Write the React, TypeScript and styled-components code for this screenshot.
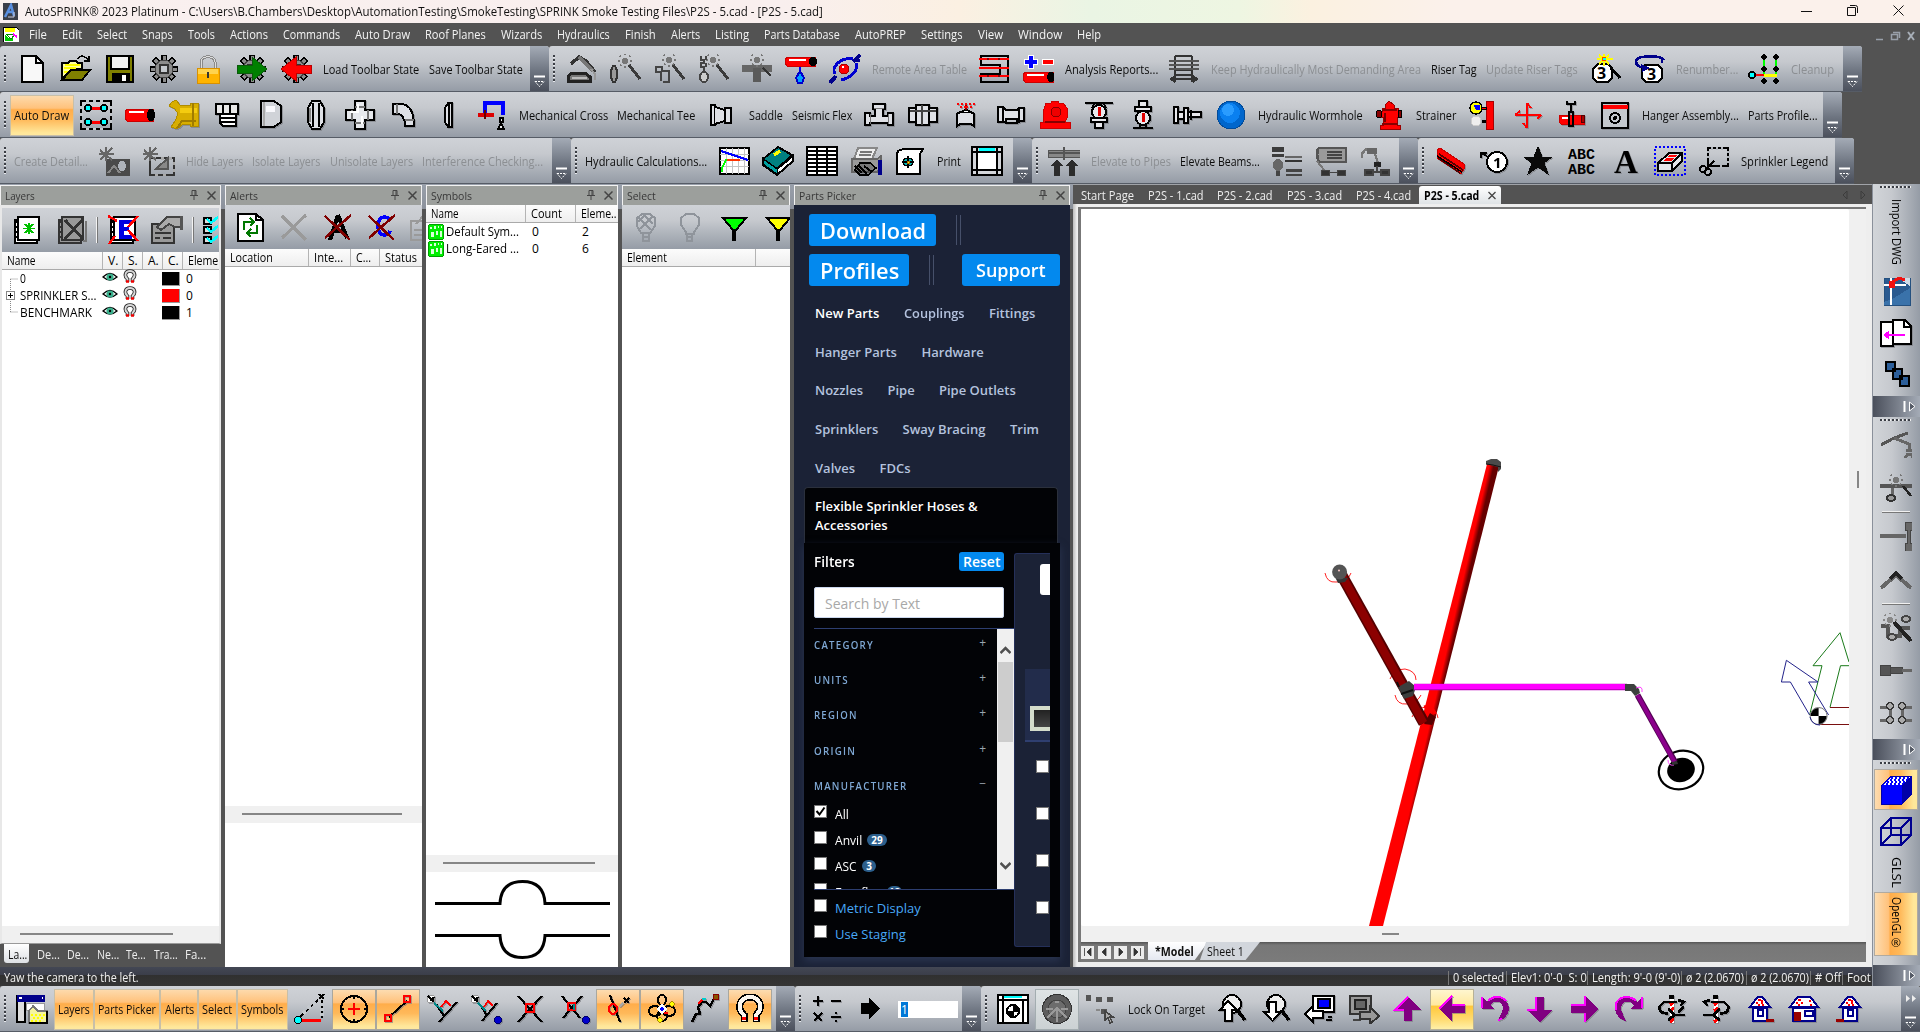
import React, { useLayoutEffect, useRef, useState } from 'react';
import styled, { createGlobalStyle, css } from 'styled-components';

const Global = createGlobalStyle`
  * { box-sizing: border-box; }
  body { margin: 0; background: #535353; overflow: hidden; font-family: "Open Sans", "Noto Sans", sans-serif; font-size: 12px; }
`;

/* ---------- fitted text ---------- */
const FitBox = styled.span<{ $w: number; $v?: boolean }>`
  display: block;
  flex: none;
  white-space: pre;
  ${p => (p.$v ? css`height: ${p.$w}px; width: 16px; writing-mode: vertical-rl; line-height: 16px;` : css`width: ${p.$w}px;`)}
`;
const FitInner = styled.span`
  display: inline-block;
  transform-origin: 0 0;
`;
function Fit({ w, v, children }: { w: number; v?: boolean; children: React.ReactNode }) {
  const ref = useRef<HTMLSpanElement>(null);
  const [k, setK] = useState(1);
  useLayoutEffect(() => {
    const el = ref.current;
    if (el) setK(w / (v ? el.offsetHeight : el.offsetWidth));
  }, [w, v]);
  return (
    <FitBox $w={w} $v={v}>
      <FitInner ref={ref} style={{ transform: v ? `scaleY(${k})` : `scaleX(${k})` }}>{children}</FitInner>
    </FitBox>
  );
}

/* ---------- icons: [path, fill, stroke, stroke width] or text ---------- */
type Part = [string, string?, string?, number?] | { t: string; x: number; y: number; s: number; c?: string; f?: string };
const N = 'none';
const K = '#000';
const circ = (x: number, y: number, r: number, ry = r) => `M${x - r} ${y}a${r} ${ry} 0 1 0 ${2 * r} 0a${r} ${ry} 0 1 0 ${-2 * r} 0Z`;
const sun = (x: number, y: number, c = '#777'): Part[] => [
  [circ(x, y, 3.2), c, N],
  [`M${x} ${y - 6}v-1M${x} ${y + 5}v2M${x - 7} ${y}h2M${x + 5} ${y}h2M${x - 5} ${y - 5}l1 1M${x + 4} ${y - 4}l1 -1M${x - 5} ${y + 5}l1 -1M${x + 4} ${y + 4}l1 1`, N, c, 2],
];
const wand: Part[] = [['M20 11L31 25', N, '#3a3a3a', 3]];
const gear: Part[] = [
  ['M16 1V29M2 15H30M6 5L26 25M26 5L6 25', N, K, 6],
  ['M16 2V28M3 15H29M7 6L25 24M25 6L7 24', N, '#8c8c8c', 3],
  [circ(16, 15, 9), '#8c8c8c', '#444', 1],
  ['M12 11H20V19H12Z', '#c4c8cd', '#333', 2],
];
const pipe = (x: number, y: number, w: number, h: number): Part[] => [
  [`M${x + 2} ${y}H${x + w}V${y + h}H${x + 2}L${x} ${y + h - 3}V${y + 3}Z`, '#f00', '#c00', 1],
  [`M${x + 4} ${y + 3}h${w - 13}`, N, '#fff', 2],
  [circ(x + w - 2, y + h / 2, 4, h / 2), K, N],
];
const house = (x: number, w: number): Part[] => [
  [`M${x + 3} 14H${x + w - 3}V27H${x + 3}Z`, '#fff', '#00008b', 2],
  [`M${x} 13L${x + 6} 5L${x + 8} 3H${x + w - 8}L${x + w - 6} 5L${x + w} 13Z`, '#fff', '#00008b', 2],
  [`M${x + 8} 6h3M${x + 6} 9h2M${x + 11} 9h2M${x + w - 9} 7h2M${x + 8} 11h2M${x + w - 8} 11h2`, N, '#f00', 2],
];
const M = '#800080';
const F = '#f0f';
const pg: Part[] = [
  ['M4 5H26V28H4Z', '#fff', K, 2], ['M7 2H28V25H7Z', '#fff', K, 2],
  ['M3 7h5M3 12h5M3 17h5M3 22h5', N, K, 2],
];
const checker = [3, 5, 7, 9].map((y, j) => `M${11 - j * 2 + (j % 2)} ${y}` + 'h2m2 0'.repeat(5)).join('');
const I: Record<string, Part[]> = {
  new: [['M6 2H20L27 9V28H6Z', '#f8f8f8', K, 2], ['M20 2V9H27', N, K, 2]],
  open: [['M2 25V9H8L10 7H16L18 9H22V15H12Z', '#ffffa0', K, 1.5], ['M5 11h15M4 14h12M4 18h5', N, '#ff0', 1.5], ['M2 26L11 16H30L22 26Z', '#808000', K, 2], ['M18 5C21 0 25 2 28 6M29 2V7H24', N, K, 1.5]],
  save: [['M3 2H29V28H3Z', '#808000', K, 2], ['M7 2H25V15H7Z', '#f4f4f4', K, 2], ['M8 19H25V28H8Z', K, K, 1], ['M18 21h4v6h-4z', '#fff', N]],
  gear,
  lock: [['M9 15V8C9 1 23 1 23 8V15', N, '#8a8a8a', 3], ['M9 15V8C9 1 23 1 23 8V15', N, '#ddd', 1], ['M5 14H27V29H5Z', '#ffb400', '#d89000', 1], ['M6 15H26V20H6Z', '#ffd34d', N], ['M15 18h2v6h-2z', '#333', N]],
  gearIn: [...gear, ['M1 11H16V3L31 15L16 27V19H1Z', '#008000', '#0a5a0a', 1]],
  gearOut: [...gear, ['M31 11H16V3L1 15L16 27V19H31Z', '#f00', '#b00', 1]],
  arm: [['M6 10L14 3L21 7L30 18', N, '#333', 3.5], ['M14 3L28 17', N, '#777', 3], ['M26 15L30 20V26', N, '#999', 2], ['M3 27V23L6 19H20L25 23V27Z', '#777', '#222', 3], ['M7 24H22', N, '#bbb', 2]],
  wand1: [[circ(5, 20, 3, 8), '#999', '#333', 2], ...sun(16, 7), ...wand],
  wand2: [...sun(16, 6), ...wand, ['M2 13h7v4h7v4M3 13v5h5v9M16 17v11h-6', N, '#444', 2.5]],
  wand3: [...sun(16, 6), ...wand, ['M4 2v4h3v3h-3v4h3v6M9 2v4M9 9v4', N, '#444', 2], [circ(7, 23, 4, 5), '#ccc', '#444', 2]],
  wand4: [['M1 11H31V18H1Z', '#666', N], ['M12 14h8v14h-8z', '#5a5a5a', N], ...sun(16, 6), ['M22 14L30 22', N, '#333', 2]],
  drip: [...pipe(0, 3, 30, 9), ['M15 13v8', N, '#00f', 2], ['M15 17L19 24L17 29H13L11 24Z', '#00a0ff', '#00c', 2]],
  node: [['M31 1L24 8M24 6H31', N, '#00008b', 3], ['M7 22L1 29', N, '#00008b', 4], ['M24 5C10 3 2 14 6 20M27 9C30 16 22 24 12 26', N, '#0000d0', 3], [circ(15, 15, 5), '#f00', '#a00', 1], ['M13 13h2', N, '#fff', 2]],
  remote: [['M3 2H30V28H3V20H22V11H3Z', N, K, 2], ['M1 5H31M1 14H31M1 22H31', N, '#f00', 2], ['M9 5h2M20 5h2M9 22h2M20 22h2', N, '#800', 2]],
  pm: [['M6 1h5v4h4v5h-4v4H6v-4H2V5h4z', '#00f', '#fff', 1], ['M20 5h11v5H20z', '#f00', '#fff', 1], ...pipe(1, 18, 30, 10)],
  hatch: [['M7 2V28M24 2V28M7 2H24M7 16H24M7 21H24', N, '#333', 2], ['M1 7H31M1 11H31M1 15H31', N, '#555', 1.5], ['M3 25H29M7 22L3 25L7 28M25 22L29 25L25 28', N, '#333', 2]],
  num1: [['M9 10H19L23 14V24L19 28H8L4 24V15Z', '#fff', K, 2], { t: '3', x: 8, y: 25, s: 16, f: 'b' }, ['M22 14L31 24', N, K, 3], ['M8 5h16M15 0v12M10 1l10 9M20 1l-10 9', N, '#ff0', 2], [circ(15, 5, 3), '#f40', '#ff0', 1], ['M14 4h3v2h-3z', '#0ff', N]],
  num2: [['M12 11H25L29 15V24L25 28H13L9 24V15Z', '#fff', K, 2], { t: '3', x: 14, y: 26, s: 16, f: 'b' }, ['M31 6C28 1 4 1 3 7C3 12 6 13 12 14M29 5V9', N, '#00008b', 2.5], ['M8 10l9 4l-8 4z', '#00008b', N]],
  clean: [['M16 3V22M28 3V22', N, '#0f0', 2], ['M4 21H16', N, '#f00', 2.5], ['M16 21H29', N, '#ff0', 3], ...[[16, 3], [28, 3], [16, 15], [28, 15], [16, 27], [28, 27]].map(([x, y]) => [`M${x - 2} ${y}l2 -2l2 2l-2 2z`, '#fff', K, 1.5] as Part), [circ(4, 21, 3), '#0ff', K, 1.5]],
  seldots: [['M1 1H31V29H1Z', N, K, 2], ['M6 1h3M13 1h3M20 1h3M6 29h3M13 29h3M20 29h3M1 6v3M1 13v3M1 20v3M31 6v3M31 13v3M31 20v3', N, '#c4c8cd', 3], ['M8 8H24M8 22H24', N, '#f00', 3], [circ(8, 8, 3), '#0ff', K, 1.5], [circ(24, 8, 3), '#0ff', K, 1.5], [circ(8, 22, 3), '#0ff', K, 1.5], [circ(24, 22, 3), '#0ff', K, 1.5]],
  pipe: pipe(1, 9, 28, 12),
  outlet: [['M4 2L8 0L12 5H22V3H30V26H22V24H15L9 29L3 27L7 21L10 14L7 9L1 6Z', '#d8ae00', '#b08c00', 1], ['M12 8H29V13H12Z', '#f4cc10', N], ['M25 3V26', N, '#a07c00', 1.5], ['M9 28L14 21H28', N, '#a07c00', 2]],
  cap: [['M4 4H26V14H4Z', '#e8e8e8', K, 2.5], ['M11 4V14M18 4V14', N, K, 2.5], ['M8 14H24V26H11L8 23Z', '#fff', K, 2], ['M8 18H24M9 22H24', N, K, 2]],
  dee: [['M5 1H18L25 6V22L18 27H5Z', '#d0d3d8', K, 2], ['M10 6H19V12H10Z', '#f8f8fc', N], ['M8 2V26', N, '#aaa', 2]],
  disc: [['M12 1H20L24 8V22L20 29H12L8 22V8Z', '#dfe1e6', K, 2], ['M13 3V27M19 3V27', N, K, 1.5], ['M10 8v14', N, '#888', 2]],
  cross: [['M11 1H21V10H30V20H21V29H11V20H2V10H11Z', '#e8eaee', K, 2], ['M8 10v10M24 10v10M11 7h10M11 23h10', N, '#777', 1.5], ['M14 4v8h-8M18 24v-8', N, '#fff', 2]],
  elbow: [['M5 4H14C22 5 26 12 26 26H17C17 19 14 14 10 14H5Z', '#dfe1e6', K, 2], ['M9 4V14M17 20H26', N, '#777', 1.5]],
  slim: [['M16 3H20V27H16L13 22V8Z', '#dfe1e6', K, 2], ['M17 4V26', N, K, 2]],
  sway: [['M9 13V3H27V15', N, '#00f', 4], ['M2 15H18', N, '#d00', 4], ['M9 10V19', N, '#600', 2], ['M24 18h3v4h-3zM22 29L25 23L28 29Z', '#eee', K, 2]],
  mech: [['M5 5H9V25H5Z', '#dfe1e6', K, 2], ['M9 7L19 10V21L9 24', '#dfe1e6', K, 2], ['M19 8H25V23H19Z', '#dfe1e6', K, 2]],
  tee: [['M2 13H7V16H12V9H10V4H22V9H20V16H25V13H30V25H25V23H7V25H2Z', '#dfe1e6', K, 2], ['M7 14v10M25 14v10M11 8h10', N, '#777', 1]],
  union: [['M2 8H30V22H2Z', '#dfe1e6', K, 2], ['M9 5H22V25H9Z', '#dfe1e6', K, 2], ['M15 5V25M3 11h26', N, '#444', 1.5]],
  wheel: [['M6 14L9 12H20L23 14V26L20 24H9L6 26Z', '#dfe1e6', K, 2], ['M11 12Q15 8 19 12', '#fff', K, 2], ['M15 5V10', N, '#800', 2], ['M6 4h2M10 4h2M14 4h2M18 4h2M22 4h2M9 7h2M13 7h4M19 7h2', N, '#f00', 2]],
  nipple: [['M3 7H8L11 10H22L24 8H29V21H24V22H3Z', '#dfe1e6', K, 2], ['M8 7v15M24 8v13M11 19h11v4H11z', '#c4c8cd', K, 1.5]],
  pump: [['M7 3L12 3L13 1H19L20 3H24L28 8V18L26 22H31V28H1V22H5L4 12Z', '#f00', '#c00', 1], [circ(17, 12, 5), '#e00', '#800', 1], ['M6 22h20', N, '#800', 2]],
  pend: [['M2 3H30', N, K, 2.5], ['M16 4V9M11 4L9 8M21 4L23 8', N, K, 2], [circ(16, 12, 7, 7), '#e8e8ec', K, 2], ['M15 7h3v9h-3z', '#d00', N], ['M8 18H24V22H8Z M12 22H20V28H12Z', '#e8e8ec', K, 2]],
  up: [['M12 1H20V7H12Z M8 7H24V11H8Z', '#e8e8ec', K, 2], [circ(16, 18, 7), '#e8e8ec', K, 2], ['M15 13h3v9h-3z', '#d00', N], ['M6 28H26', N, K, 2.5], ['M13 25v2M19 25v2', N, K, 2]],
  side: [['M3 7H7V23H3Z M7 12H13V19H7Z M13 8H17V23H13Z M17 12H30V17H17Z', '#e8e8ec', K, 1.8], ['M20 10V20', N, K, 2]],
  ball: [[circ(16, 15, 14), '#06c', '#024b99', 1], [circ(15, 13, 10), '#0a80f0', N], [circ(13, 10, 6), '#2a9cff', N]],
  hydrant: [['M16 1L21 5V8H25V11H28V17H24V25H27V29H7V25H10V17H5V11H9V8H12V5Z', '#f00', '#900', 1], [circ(6, 14, 3, 4), '#800', K, 1], [circ(27, 14, 2, 4), '#800', K, 1], ['M9 10H24M9 24H25', N, '#800', 1.5], ['M12 13v9', N, '#700', 1.5]],
  siam: [['M19 1H26V29H19Z', '#f00', '#a00', 1], [circ(9, 8, 6), '#ff0', K, 1.5], ['M7 5h5v4h-3z', '#00f', '#00f', 1], ['M14 7h5v2h-5z', '#f00', K, 1], [circ(9, 21, 5), '#eee', '#ccc', 1], ['M15 21h4', N, K, 3]],
  fourway: [['M16 3V28M4 15H30', N, '#f00', 2], ['M16 3L20 8M16 28L12 23M4 15L9 11M30 15L26 19', N, '#f00', 2]],
  hanger: [['M12 1V4H20V1', N, K, 2], ['M16 5V13', N, K, 2], ['M4 15H29V24H6L4 22Z', '#f00', '#c00', 1], ['M7 18H13', N, '#fff', 2], ['M14 12H18V26H14Z', N, K, 2], [circ(28, 19, 2, 4), '#a00', '#500', 1]],
  hwin: [['M3 3H29V28H3Z', '#c4c8cd', K, 2], ['M4 5H28V8H4Z', '#f00', '#f00', 1], [circ(16, 18, 5, 5), N, K, 2], [circ(16, 18, 2, 2), K, N]],
  det1: [['M7 13H31V30H7Z', '#4a4a4a', N], [circ(23, 20, 4, 5), '#aeb3ba', N], ['M9 27l6-7l6 7', N, '#888', 2], ['M7 1v14M1 4l12 10M13 2L1 14M0 8h15', N, '#666', 2]],
  det2: [['M7 12H31V29H7Z', N, '#333', 2], ['M10 12h3M18 12h3M26 12h3M31 16v3M31 23v3M12 29h3M20 29h3', N, '#aaa', 3], ['M13 23L25 12V23Z', '#888', '#555', 2], ['M7 1v14M1 4l12 10M13 2L1 14M0 8h15', N, '#666', 2]],
  graph: [['M2 2H31V28H2Z', '#fff', K, 2], ['M8 2V28M14 2V28M20 2V28M26 2V28M2 8H31M2 14H31M2 20H31', N, '#c4c4c4', 1], ['M3 5L30 14', N, '#00f', 2.5], ['M4 26V22L8 14H20', N, '#0f0', 2], ['M9 14H22', N, '#f30', 1.5]],
  book: [['M1 13L16 1L30 9L15 23Z', '#008080', K, 2], ['M1 13V19L15 29L31 15V10L15 23Z', '#fff', K, 2], ['M1 13L15 23V28L1 18Z', '#00a0a0', K, 1], ['M12 9L18 5', N, '#ff0', 3.5]],
  list: [['M1 1H31V29H1Z', '#fff', K, 2.5], ['M1 5H31M1 9H31M1 13H31M1 17H31M1 21H31M1 25H31M11 1V29M21 1V29', N, K, 1.8]],
  printer: [['M8 2H27L22 13H4Z', '#eee', '#888', 2], ['M10 6h12M9 9h12', N, '#777', 1.5], ['M2 13H27L31 10V22L27 26H2Z', '#999', '#666', 1.5], ['M5 20L12 27M9 20L17 28M14 20l8 6', N, K, 2], ['M28 14H31V28H28', '#00008b', '#00008b', 1], ['M5 24L10 17H20L26 22L18 29H10Z', 'rgba(0,0,0,.2)', K, 1.5]],
  scroll: [['M4 5L9 3H29L26 8V28H3V8Z', '#fff', K, 2], [circ(14, 16, 5, 4), '#00b0b0', K, 1.2], ['M14 10V22M8 16H20', N, K, 1.2], ['M13 15h2v2h-2z', '#ff0', '#a60', 1]],
  frame: [['M1 1H31V29H1Z', '#d4d6da', K, 2.5], ['M6 6H26V24H6Z', '#fff', K, 2.5], ['M8 2H24V5H8Z', '#0ff', N], ['M1 6H6M26 6H31M1 24H6M26 24H31M6 1V6M26 1V6M6 24V29M26 24V29', N, K, 1.5]],
  elev: [['M0 4H32V11H0Z', '#888', '#555', 1], ['M0 7H32M16 1v13', N, '#555', 1.5], ['M9 13L15 20H12V30H6V20H3Z M24 13L30 20H27V30H21V20H18Z', '#2c2c2c', N]],
  eq1: [['M1 1H13V6H1Z M1 8H13V11H1Z', '#3c3c3c', N], ['M14 11H31', N, '#666', 2], ['M14 15h17', N, '#333', 1.5], [circ(7, 19, 5, 6), '#666', N], ['M5 25h4v5H5zM15 23H31V26H15z M15 28h16v2H15z', '#444', N]],
  eq2: [['M3 2H31V16H4Q1 10 3 2', '#999', '#555', 2.5], ['M12 6H27M12 9H27M12 12H27', N, '#444', 1.5], ['M2 15L9 24', N, '#777', 2], ['M6 24H14V29H6Z M22 24H30V29H22Z M14 26H22', '#333', '#444', 1]],
  eq3: [['M8 2H18V8H8Z', '#666', N], ['M8 3Q2 6 3 12', N, '#777', 2.5], ['M16 8L19 17', N, '#777', 2], ['M15 16h7v5h-7z', '#222', N], ['M6 24H14V29H6Z M22 24H30V29H22Z M18 20v6M14 26H22', '#333', '#444', 1.5]],
  beam: [['M3 4L6 2L30 18V23L27 28L3 12Z', '#f00', '#c00', 1], ['M5 8L29 24M4 12L26 27', N, '#500', 1.5], ['M3 10L28 26', N, K, 1.5]],
  one: [[circ(19, 16, 10), '#fff', K, 2], { t: '1', x: 15, y: 22, s: 15, f: 'b' }, ['M9 10L3 7M3 12V7H9', N, K, 2]],
  star: [['M16 1L20 11H30L22 17L26 28L16 21L6 28L10 17L2 11H12Z', '#0a0a0a', '#0a0a0a', 1]],
  abc: [{ t: 'ABC', x: 2, y: 13, s: 15, f: 'm' }, { t: 'ABC', x: 2, y: 28, s: 15, f: 'm' }],
  A: [{ t: 'A', x: 4, y: 27, s: 33, f: 's' }],
  sel3d: [['M1 1H31V29H1Z', N, '#00f', 2], ['M4 17L15 7H28V15L18 25H4Z', '#e4e6ea', K, 2], ['M4 17H18V25M18 17L28 7', N, K, 2], ['M11 14L13 12H20L18 14Z M15 10L16 9H23L22 10z', '#f00', '#f00', 1]],
  selkey: [['M10 2H30V20H10Z', N, K, 2], ['M13 2h2M18 2h2M23 2h2M30 5v2M30 10v2M30 15v2M10 5v2M10 10v2M22 20h2', N, '#b4b8be', 3], ['M16 15L9 22', N, K, 2], [circ(5, 23, 3), '#b4b8be', K, 2], [circ(10, 26, 3), '#b4b8be', K, 2]],
  impdwg: [['M4 2H30V29H4Z', '#2a5a90', '#24507f', 1], ['M18 2H30V10Z', '#cfdce8', N], ['M14 22L30 12V29H4V26Z', '#3a72aa', N], ['M4 9H26M11 2V29', N, '#fff', 2], ['M12 8Q16 0 25 4', N, '#f01010', 3], ['M9 5h6v7h-6z', '#f01010', N]],
  pages: [['M1 4H13V28H1Z', '#fff', K, 2], ['M13 2H25L31 8V26H13Z', '#fff', K, 2], ['M24 2V9H31', N, K, 2], ['M5 17H25M9 14L5 17L9 20', N, F, 2.5]],
  cubes: [['M6 3H15V12H6Z M13 10H22V20H13Z M20 17H29V27H20Z', '#2d5f9a', K, 2]],
  s1: [['M1 15L14 8L28 3', N, '#555', 3], ['M14 8L29 14V20', N, '#666', 3], ['M26 20h6M25 28l3-4h3l2 4', N, '#666', 3]],
  s2: [['M0 12H32', N, '#555', 4], ['M12 14V22', N, '#666', 3], [circ(11, 24, 4, 3), '#999', '#333', 2], ...sun(16, 6), ['M23 12L31 22', N, '#222', 2.5]],
  s3: [['M0 15H26', N, '#666', 4], ['M25 1h7v8h-2v13h2v8h-7v-8h2V9h-2z', '#666', '#444', 1]],
  s4: [['M1 22L16 9L31 22', N, '#666', 4], ['M10 13L16 7L22 13', N, '#222', 4]],
  s5: [['M1 14H8V24H20V16H30', N, '#555', 4], [circ(26, 7, 4, 3), '#aaa', '#444', 2], [circ(12, 25, 4, 3), '#aaa', '#444', 2], ...sun(10, 8, '#888'), ['M14 10L31 29', N, '#222', 4]],
  s6: [['M0 10H10V20H0Z M10 12H22V18H10Z', '#555', '#444', 1], ['M22 15H32', N, '#666', 3]],
  s7: [['M0 9H10M22 9H32M0 22H10M22 22H32M10 9V22M22 9V22', N, '#666', 3], ...[[10, 8], [22, 8], [10, 22], [22, 22]].map(([x, y]) => [circ(x, y, 3.5), '#aaa', '#333', 1.5] as Part)],
  solid: [['M1 11L11 1H31V20L22 29H1Z', '#00f', '#00a', 1], ['M12 2H30L22 10H3Z', '#fff', N], [checker, N, '#00f', 2], ['M22 11V29L31 20V1Z', '#0000a8', N]],
  wire: [['M1 12H21V29H1Z M11 2H31V19H11Z M1 12L11 2M21 12L31 2M1 29L11 19M21 29L31 19', N, '#000090', 2]],
  wins: [['M1 2H9V28H1Z', '#ddd', K, 2], ['M1 1H29V8H1Z', '#00008b', N], ['M3 4h3M26 4h1', N, '#fff', 2], ['M10 9H28V16H10Z', '#fff', '#999', 1], ['M13 17L17 12L22 17H31V29H13Z', '#f4f4a0', '#777', 1.5], ['M15 21h2m2 0h2m2 0h2m2 0h2M17 24h2m2 0h2m2 0h2M15 27h2m2 0h2m2 0h2', N, '#ff0', 2], ['M31 17V29H13', N, K, 1.5]],
  snap0: [['M5 26H27', N, '#f00', 3], ['M5 24L24 6M28 6V24', N, K, 1.8], ['M9 17l3 3M14 12l3 3M19 8l3 3M26 10h4M26 15h4M26 20h4', N, '#c4c8cd', 3], [circ(4, 26, 3.5), '#0ff', K, 1], ['M25 0l5 5M30 0l-5 5', N, K, 1.5]],
  snap1: [[circ(16, 15, 13), N, K, 2], ['M16 9V21M10 15H22', N, '#f00', 2], ['M16 1v4M16 25v4M3 15h3M26 15h3', N, K, 1.5]],
  snap2: [['M7 23L25 7', N, K, 2], ['M3 21h6v6H3z M22 2h6v6h-6z', N, '#f00', 2.5]],
  snap3: [['M13 28L31 8M10 10L18 22', N, K, 2], ['M8 9L17 17', N, '#088', 2], ['M15 13L20 7L25 12', N, '#f00', 1.8], [circ(5, 5, 4), '#fff', '#999', 1], ['M2 2l6 6M8 3l-3 4', N, K, 2.5]],
  snap4: [['M12 27L27 9M10 10L17 22', N, K, 2], ['M8 9L16 17', N, '#088', 2], ['M14 13L18 7L23 12', N, '#f00', 1.8], [circ(5, 5, 4), '#fff', '#999', 1], ['M2 2l6 6M8 3l-3 4', N, K, 2.5], [circ(28, 26, 3.5), '#00c', '#006', 1]],
  snap5: [['M4 2L28 28M28 2L4 28', N, K, 2.2], ['M12 10H20V18H12Z', N, '#f00', 2.5]],
  snap6: [['M4 2L22 24M24 2L5 24', N, K, 2.2], ['M10 9H17V16H10Z', N, '#f00', 2.5], ['M16 10l0 6', N, '#088', 2], [circ(28, 26, 3.5), '#00c', '#006', 1]],
  snap7: [['M8 1L18 28', N, K, 2.2], [circ(11, 15, 4, 5), N, '#f00', 2.2], ['M22 4l5 5M27 4l-5 5', N, K, 1.5], ['M17 13l4-4', N, '#aaa', 1.5]],
  snap8: [[circ(16, 6, 4, 5), N, K, 2], [circ(9, 17, 6, 5), N, K, 2], [circ(23, 17, 6, 5), N, K, 2], [circ(16, 22, 5), N, K, 2], ['M16 11L20 15L16 19L12 15Z', '#00f', '#fff', 1.5], [circ(26, 10, 2.2), '#ff0', '#a80', 1], [circ(14, 26, 2.2), '#ff0', '#a80', 1], ['M18 19h4', N, '#f00', 2]],
  snap9: [['M2 28L6 20H10L8 13L12 8H16L20 12L25 3', N, K, 2.5], ['M8 10L13 5', N, '#f00', 2], [circ(26, 3, 3), '#850', '#800', 1], ['M12 5h4', N, '#0cc', 2]],
  magnet: [['M10 28V21C2 14 6 3 16 3C26 3 30 14 22 21V28', N, K, 7], ['M10 27V21C2 14 6 3 16 3C26 3 30 14 22 21V27', N, '#fbf6ee', 4], ['M8 24h4M20 24h4', N, '#f00', 3]],
  ops: [['M7 2V12M2 7H12M20 7H30M3 19L11 27M11 19L3 27M20 23H30M25 18v2M25 26v2', N, K, 2]],
  play: [['M6 9H14V4L25 14.500L14 25V20H6Z', K, N]],
  tgt: [['M1 1H31V29H1Z', '#fff', K, 2.5], ['M1 6H31M6 1V29M26 6V29', N, K, 2], ['M7 2H25V4H7Z', '#0ff', N], [circ(16, 17, 6), '#fff', K, 2], ['M16 11v6h6a6 6 0 0 0-6-6M16 23v-6h-6a6 6 0 0 0 6 6', K, K, 1]],
  sphere: [[circ(16, 15, 14.5), '#5c5c5c', '#333', 1], [circ(16, 15, 9), '#6c6c6c', '#444', 1], ['M16 14L6 24M16 14V28M16 14L26 24M5 15H12M20 15H27M14 8h4', N, '#999', 1.5]],
  lockt: [['M1 1h5v6H1zM11 3h6v5h-6zM22 3h6v5h-6zM16 15h6v5h-6z', '#555', N], ['M11 16h4', N, '#888', 2], ['M20 17V26L23 24L25 29L27 28L25 23H28Z', '#aaa', '#444', 1.5]],
  zoomIn: [[circ(16, 10, 9), '#eee', K, 2], ['M22 17L29 26', N, K, 3.5], ['M12 7L21 16H16V27H9V16H4Z', '#fff', K, 2]],
  zoomOut: [[circ(16, 10, 9), '#eee', K, 2], ['M22 17L29 26', N, K, 3.5], ['M9 8H16V18H21L12.500 27L4 18H9Z', '#fff', K, 2]],
  prevV: [['M9 2H30V18H9Z', '#fff', K, 2], ['M14 5H26V14H14Z', '#00f', K, 2], ['M24 23h4M22 26h6', N, K, 2], ['M1 20L9 12V17H19V24H9V28Z', '#fff', K, 2]],
  nextV: [['M2 2H23V20H2Z', '#999', '#333', 2.5], ['M7 6H18V15H7Z', '#666', '#222', 2], ['M5 26h8', N, '#444', 2], ['M31 22L22 13V18H12V25H22V30Z', '#999', '#333', 2]],
  aU: [['M16 3L29 16H20V27H12V16H3Z', M, N], ['M16 3L3 16H12', N, F, 2]],
  aL: [['M3 15L16 2V11H29V19H16V28Z', M, N], ['M16 2L3 15', N, F, 2], ['M16 11H29', N, F, 2]],
  aD: [['M16 28L3 16H12V3H20V16H29Z', M, N], ['M12 3V16H3', N, F, 2]],
  aR: [['M30 15L17 2V11H3V19H17V28Z', M, N], ['M17 28V19M3 11H17V2', N, F, 2]],
  rL: [['M2 3V15H14L10 11C16 4 26 9 22 18C21 22 18 24 18 27C27 25 31 17 28 10C24 1 12 1 7 8Z', M, N], ['M2 3V14M8 7C14 1 22 2 26 7M18 26l4 -1', N, F, 2]],
  rR: [['M30 3V15H18L22 11C16 4 6 9 10 18C11 22 13 24 14 27C5 25 1 17 4 10C8 1 20 1 25 8Z', M, N], ['M30 3V14M24 7C18 1 8 2 4 9L4 16', N, F, 2]],
  spin1: [['M16 5V29', N, '#fff', 4], ['M14 11l4-3M14 17l4-3M14 28l4-3', N, '#f00', 3], ['M13 2.500h5', N, K, 4], ['M21 8H8L3 13L5 18L12 20M12 15L19 21L12 26M24 12L28 8L22 6M20 21H29M22 18L28 13', N, K, 2.8]],
  spin2: [['M16 5V29', N, '#fff', 4], ['M14 11l4-3M14 17l4-3M14 28l4-3', N, '#f00', 3], ['M13 2.500h5', N, K, 4], ['M11 8H24L29 13L27 18L20 20M20 15L13 21L20 26M8 12L4 8L10 6M12 21H3', N, K, 2.8]],
  h1: [...house(6, 20), ['M14 16h5v6h-5z', '#fff', '#00008b', 2], ['M22 26h8', N, '#900', 3]],
  h2: [...house(2, 28), ['M6 18h7v9H6z', '#900', N], ['M17 17h8v5h-8z', '#fff', '#00008b', 2]],
  h3: [...house(8, 20), ['M16 16h5v6h-5z', '#fff', '#00008b', 2], ['M4 26h8', N, '#900', 3]],
  layNew: [...pg, ['M18 8V19M12 13.5H24M14 9L22 18M22 9L14 18', N, '#00c000', 1.8]],
  layDel: [['M4 5H26V28H4Z', '#999', '#333', 2], ['M7 2H28V25H7Z', '#999', '#333', 2], ['M3 7h5M3 12h5M3 17h5M3 22h5', N, '#333', 2], ['M10 5L28 24M28 4L10 24', N, '#333', 3], ['M28 26H31V6', N, '#777', 2]],
  layE: [...pg, ['M12 5H25V9H17V12H22V16H17V20H25V24H12Z', '#0000e0', N], ['M1 1L10 6M31 1L21 12M21 15L31 26M8 21L2 29', N, '#f00', 2.5]],
  props: [['M1 9H23V28H1Z', '#999', '#333', 2], ['M4 18h16M4 23h5M12 23h8', N, '#333', 2], ['M6 12L12 6L16 2H31V12H24L18 9L10 15Z', '#aaa', '#444', 2], ['M29 1h3v14h-3z', '#555', N]],
  checks: [['M1 3h7v6H1zM1 12h7v6H1zM1 22h7v6H1z', '#ddd', K, 2], ['M4 4l4 4l7-6M4 13l4 4l7-6M4 23l4 4l7-6', N, '#0ff', 2.5]],
  refresh: [['M4 2H22L29 8V29H4Z', '#fff', K, 2.2], ['M22 2V8H29', N, K, 2], ['M10 18V10H18M16 6L20 10L16 14M23 13V21H15M17 17L13 21L17 25', N, '#007800', 2.2]],
  xg: [['M4 4L28 28M28 3L4 26', N, '#9a9a9a', 3]],
  xA: [['M16 3L8 28M16 3L25 26M11 19H22', N, K, 4], ['M3 4L28 28M29 3L3 26', N, '#800000', 2.5]],
  xC: [['M24 9C22 3 12 3 12 14C12 25 22 25 24 19', N, '#00f', 3.5], ['M3 4L28 28M29 3L3 26', N, '#800000', 2.5]],
  propsG: [['M1 9H23V28H1Z', N, '#9a9a9a', 2], ['M4 18h16M4 23h16M6 12L14 3', N, '#9a9a9a', 2]],
  bulb1: [['M11 21L7 14V6L12 2H20L25 6V14L20 21Z', N, '#8f949b', 2], ['M9 6l12 12M14 3l9 9M22 5L10 17M15 3L8 10M13 21v8h6v-8M13 25h6', N, '#8f949b', 1.5]],
  bulb2: [['M12 20L7 13V6L12 2H20L25 6V13L20 20V22H12Z', N, '#8f949b', 2], ['M13 22v7h5v-7M13 25h5', N, '#8f949b', 1.5]],
  funG: [['M5 6H28L18 18H15Z', '#0f0', K, 2], ['M4 6H29', N, K, 2], ['M14 18h4v11h-4z', K, N]],
  funY: [['M5 6H28L18 18H15Z', '#ff0', K, 2], ['M4 6H29', N, K, 2], ['M14 18h4v11h-4z', K, N]],
};
const fam: Record<string, string> = { b: 'Open Sans', m: 'Liberation Mono', s: 'Liberation Serif' };
const Svg = styled.svg<{ $shadow?: boolean }>`
  flex: none;
  display: block;
  shape-rendering: crispEdges;
  overflow: hidden;
  ${p => p.$shadow && css`filter: drop-shadow(1px 1px 0 rgba(120, 122, 126, 0.6)); overflow: visible;`}
`;
const SHADOWED = new Set('outlet cap dee disc cross elbow slim tee union wheel nipple pend up side hanger hwin fourway one star A aU aL aD aR rL rR h1 h2 h3 spin1 spin2 zoomIn zoomOut prevV snap2 snap3 snap4 snap5 snap6 snap7 snap9 pages ops beam'.split(' '));
function Icon({ n }: { n: string }) {
  return (
    <Svg width={32} height={30} viewBox="0 0 32 30" $shadow={SHADOWED.has(n)}>
      {I[n].map((p, i) =>
        Array.isArray(p) ? (
          <path key={i} d={p[0]} fill={p[1] ?? N} stroke={p[2] ?? N} strokeWidth={p[3] ?? 2} strokeDasharray={n === 'sel3d' && i === 0 ? '2 2' : undefined} />
        ) : (
          <text key={i} x={p.x} y={p.y} fontSize={p.s} fontWeight={700} fill={p.c ?? K} fontFamily={fam[p.f ?? 'b']}>{p.t}</text>
        ),
      )}
    </Svg>
  );
}

/* ---------- toolbars ---------- */
const silver = 'linear-gradient(#cfd2d7, #c6c9ce 35%, #b2b7be 60%, #959ca6)';
const orange = 'linear-gradient(#fddcb0, #ffc27c 32%, #ffad4a 36%, #ffb95a 60%, #ffe79a 92%, #ffe9a0)';
const BarRow = styled.div`display: flex; height: 46px; flex: none; background: #535353;`;
const BarBox = styled.div<{ $w: number }>`
  display: flex;
  align-items: center;
  width: ${p => p.$w}px;
  height: 46px;
  padding-top: 1px;
  flex: none;
  background: ${silver};
  border-bottom: 1px solid #565c66;
  border-radius: 3px 3px 0 0;
  overflow: hidden;
`;
const Grip = styled.div<{ $w: number }>`
  width: ${p => p.$w}px;
  height: 28px;
  flex: none;
  background: repeating-linear-gradient(#3a3d44 0 2px, #e8eaee 2px 3px, transparent 3px 4px) 4px 0 / 2px 100% no-repeat;
`;
const Cell = styled.div<{ $tone?: string; $w?: number }>`
  width: ${p => p.$w ?? 44}px;
  height: 41px;
  flex: none;
  display: flex;
  align-items: center;
  justify-content: center;
  ${p => p.$tone === 'on' && css`background: ${orange}; border: 1px solid #e8dcc0; outline: 1px solid #a9a79e; outline-offset: -1px;`}
  ${p => p.$tone === 'hot' && css`background: linear-gradient(#fff6cf, #ffe9a0 38%, #ffc83c 42%, #ffdb70 75%, #fff0a8); border: 1px solid #b7b196;`}
  ${p => p.$tone === 'dim' && css`background: linear-gradient(#dfe4e5, #cbd1d3); border: 1px solid #a3adb0;`}
`;
const Label = styled.div<{ $off?: boolean; $on?: boolean; $w: number }>`
  flex: none;
  height: 41px;
  line-height: 41px;
  width: ${p => p.$w + (p.$on ? 8.7 : 9.5)}px;
  padding-left: ${p => (p.$on ? 4.4 : 5)}px;
  color: ${p => (p.$off ? '#8c8f93' : '#0c0c0c')};
  ${p => p.$on && css`background: ${orange}; box-shadow: inset 0 0 0 1px #c8bfa8;`}
`;
const CapBox = styled.div`
  width: 19px;
  height: 46px;
  flex: none;
  margin-left: auto;
  display: flex;
  align-items: flex-end;
  justify-content: center;
  padding-bottom: 4px;
  background: linear-gradient(#a4abb6, #6d7480 55%, #4a4f5b);
`;
const Cap = () => (
  <CapBox>
    <svg width="12" height="13" viewBox="0 0 12 13"><path d="M0 1.5H11" stroke="#fff" strokeWidth="2" /><path d="M1 6.5H10L5.5 11.5Z" fill="#555b66" stroke="#fff" strokeDasharray="2 1" /></svg>
  </CapBox>
);
const EndArrows = styled.div`
  width: 19px; height: 46px; flex: none; margin-left: auto; display: flex; flex-direction: column; justify-content: space-between; align-items: center; padding: 9px 0 3px;
  background: linear-gradient(#a4abb6, #6d7480 55%, #4a4f5b);
`;
type It = { i?: string; t?: string; w?: number; off?: boolean; tone?: string; on?: boolean };
const ic = (s: string): It[] => s.split(' ').map(i => ({ i }));
const tx = (t: string, w: number, off = false): It => ({ t, w, off });
function Items({ items }: { items: It[] }) {
  return (
    <>
      {items.map((x, k) =>
        x.i ? <Cell key={k} $tone={x.tone} $w={x.w}><Icon n={x.i} /></Cell> : (
          <Label key={k} $w={x.w!} $off={x.off} $on={x.on}><Fit w={x.w!}>{x.t}</Fit></Label>
        ),
      )}
    </>
  );
}
function Bar({ w, g = 10, items, end }: { w: number; g?: number; items: It[]; end?: React.ReactNode }) {
  return <BarBox $w={w}><Grip $w={g} /><Items items={items} />{end ?? <Cap />}</BarBox>;
}

/* ---------- window frame ---------- */
const Window = styled.div`width: 1920px; height: 1032px; display: flex; flex-direction: column; overflow: hidden; background: #535353;`;
const Title = styled.div`
  height: 23px; flex: none; display: flex; align-items: center; padding: 0 16px 0 3px; gap: 7px; font-size: 12.5px; color: #111;
  background: linear-gradient(90deg, #f9f0ef 0, #f9efee 780px, #fbf0e2 960px, #eaf5e4 1090px, #eef6e2 1240px, #fbf1e0 1310px, #fbf1eb 1450px);
`;
const Grow = styled.div`flex: 1;`;
const WinBtns = styled.div`display: flex; gap: 35px; align-items: center; padding-bottom: 2px;`;
const Menu = styled.div`height: 23px; flex: none; display: flex; align-items: center; padding: 0 4px 0 3px; gap: 10px; color: #f4f4f4; background: #535353;`;
const MenuItems = styled.div`display: flex; gap: 15px;`;
const Middle = styled.div`height: 802px; flex: none; display: flex;`;
const Left = styled.div`width: 1872px; display: flex; flex-direction: column;`;
const Panels = styled.div`height: 783px; display: flex; background: linear-gradient(#99a0ab 0, #8b919b 25px, #535353 25px); overflow: hidden;`;
const Panel = styled.div<{ $w: number; $gap: number }>`width: ${p => p.$w}px; margin-right: ${p => p.$gap}px; padding-top: 1px; flex: none; display: flex; flex-direction: column; overflow: hidden;`;
const Head = styled.div`
  height: 20px; flex: none; display: flex; align-items: center; justify-content: space-between; padding: 0 4px 1px 4px;
  border: 1px solid #f2f2f2; border-bottom: 0; background: #9c9f9c; color: #383838; font-size: 11.5px;
`;
const HeadBtns = styled.div`display: flex; gap: 9px; align-items: center;`;
const PinX = () => (
  <HeadBtns>
    <svg width="8" height="10" viewBox="0 0 8 10"><path d="M2 0.5H6V5.5M2 0.5V5.5M5 1V5M0 5.5H8M4 6V10" stroke="#444" fill="none" /></svg>
    <svg width="9" height="9" viewBox="0 0 9 9"><path d="M0.5 0.5L8.5 8.5M8.5 0.5L0.5 8.5" stroke="#444" strokeWidth="1.5" /></svg>
  </HeadBtns>
);
const PTool = styled.div<{ $p: number }>`height: 44px; flex: none; display: flex; align-items: center; padding-left: ${p => p.$p}px; background: ${silver}; overflow: hidden;`;
const Sep = styled.div`width: 2px; margin: 0 3px; height: 26px; flex: none; background: #f3f3f3; border-right: 1px solid #777;`;
const Cols = styled.div`height: 18px; flex: none; display: flex; background: linear-gradient(#fcfcfc, #eee); border-bottom: 1px solid #aaa; overflow: hidden; line-height: 18px;`;
const Col = styled.div<{ $w: number }>`width: ${p => p.$w}px; flex: none; border-right: 1px solid #b4b4b4; padding-left: 5px; overflow: hidden;`;
const White = styled.div`flex: 1; background: #fff; overflow: hidden;`;
const Blank = styled.div`height: 144px; flex: none; background: #fff;`;
const Scroll = styled.div<{ $l: number; $w: number; $h?: number }>`
  height: ${p => p.$h ?? 17}px; flex: none; background: linear-gradient(#868686, #868686) ${p => p.$l}px 7px / ${p => p.$w}px 2px no-repeat, #f0f0f0;
`;
const SymPreview = styled.svg`background: #fff; flex: none;`;
const Status = styled.div`height: 19px; flex: none; display: flex; align-items: center; background: linear-gradient(#434754, #3b3e4a 8px, #303030 8px, #353535); color: #f2f2f2; padding: 2px 0 0 4px;`;
const Seg = styled.div<{ $w: number }>`width: ${p => p.$w}px; flex: none; border-left: 1px solid #777; height: 14px; line-height: 14px; padding-left: 4px;`;

/* layers */
const LayFrame = styled.div`flex: 1; display: flex; flex-direction: column; border: 2px solid #e8e8e8; border-top-width: 3px; border-bottom: 1px solid #999; min-height: 0;`;
const LRow = styled.div`height: 17px; display: flex; align-items: center;`;
const LName = styled.div`width: 100px; padding-left: 18px; flex: none;`;
const Swatch = styled.div<{ $c: string }>`width: 18px; height: 14px; background: ${p => p.$c}; border-right: 1px solid #999; border-bottom: 1px solid #999;`;
const LC = styled.div<{ $w: number }>`width: ${p => p.$w}px; flex: none;`;
const Tree = styled.div`background: #fff; flex: 1; position: relative;`;
const TreeLines = styled.svg`position: absolute; left: 3px; top: 4px;`;
const LTabs = styled.div`height: 23px; flex: none; display: flex; padding-left: 4px; gap: 7.5px; color: #eee; line-height: 22px; background: #535353;`;
const LTab = styled.div<{ $a?: boolean }>`
  height: 19px; padding: 0; ${p => p.$a && css`background: linear-gradient(#fff, #dde0e4); color: #111; border-radius: 0 0 3px 3px; padding: 0 2px 0 4px;`}
`;
const Eye = () => (
  <svg width="16" height="12" viewBox="0 0 16 12"><path d="M1 6Q8 -1 15 6Q8 12 1 6Z" fill="#fff" stroke="#000" strokeWidth="1.3" /><circle cx="8" cy="6" r="3.6" fill="#3ab08c" /><circle cx="8" cy="6" r="1.2" fill="#000" /></svg>
);
const Mag = () => (
  <svg width="14" height="15" viewBox="0 0 14 15"><path d="M4.500 13V10C1 7 2 2 7 2S13 7 9.500 10V13" stroke="#222" strokeWidth="3.600" fill="none" /><path d="M4.500 13V10C1 7 2 2 7 2S13 7 9.500 10V13" stroke="#d8d8d8" strokeWidth="1.800" fill="none" /><path d="M3 12.500h3M8 12.500h3" stroke="#e00" strokeWidth="2.500" /></svg>
);
const layers: [string, number, string, string][] = [['0', 6, '#000', '0'], ['SPRINKLER S...', 76, '#f00', '0'], ['BENCHMARK', 72, '#000', '1']];

/* symbols */
const SRow = styled.div`height: 17px; display: flex; align-items: center; padding-left: 2px;`;
const SymIcon = () => (
  <svg width="16" height="16" viewBox="0 0 16 16" shapeRendering="crispEdges"><rect x="0.5" y="0.5" width="15" height="15" rx="2" fill="#00ee00" stroke="#00a000" /><path d="M2 3h2v2H2zM6 2h2v3H6zM10 2h1v2h-1zM13 2h1v2h-1zM3 8h3v5H3zM8 7h2v4H8zM12 7h2v6h-2z" fill="#d8ffd8" /></svg>
);

/* parts picker */
const Picker = styled.div`flex: 1; background: #1b2236; padding: 9px 10px 0; display: flex; flex-direction: column; color: #fff; font-size: 13px;`;
const BigRow = styled.div`display: flex; height: 32px; margin-bottom: 8px; padding-left: 5px; flex: none;`;
const BigBtn = styled.div<{ $w: number; $f: number; $p: number; $m?: number }>`
  width: ${p => p.$w}px; padding-left: ${p => p.$p}px; margin-left: ${p => p.$m ?? 0}px; height: 32px; line-height: 33px; background: #0389ee; border-radius: 3px; font-weight: 600; font-size: ${p => p.$f}px;
`;
const Bars = styled.div<{ $m: number }>`width: 5px; height: 30px; margin: 1px 0 0 ${p => p.$m}px; border-left: 1px solid #46506a; border-right: 1px solid #46506a;`;
const NavRow = styled.div`display: flex; gap: 24.5px; height: 38.6px; align-items: center; padding-left: 11px; font-weight: 600; flex: none;`;
const NavA = styled.div<{ $on?: boolean }>`color: ${p => (p.$on ? '#fff' : '#b4c2de')};`;
const Sub = styled.div`width: 254px; height: 56px; flex: none; padding: 9px 0 0 10px; background: #020306; border: 1px solid #2b303c; border-bottom: 0; border-radius: 4px 4px 0 0; font-weight: 600; line-height: 19.5px;`;
const Black = styled.div`width: 256px; height: 414px; flex: none; background: #020306; display: flex; padding: 10px; box-shadow: 0 4px 8px #2a3550; overflow: hidden;`;
const FCol = styled.div`width: 200px; flex: none; display: flex; flex-direction: column;`;
const FHead = styled.div`display: flex; justify-content: space-between; align-items: center; height: 19px; margin-right: 10px; padding-bottom: 1px; font-weight: 600; font-size: 14px; flex: none;`;
const Reset = styled.div`width: 45px; height: 19px; line-height: 19px; background: #0389ee; border-radius: 3px; padding-left: 4px;`;
const Search = styled.div`width: 190px; height: 31px; margin: 15px 0 10px; background: #fff; border: 1px solid #ccd8ee; border-radius: 2px; color: #a8a8a8; font-size: 14px; line-height: 31px; padding-left: 10px; flex: none;`;
const FList = styled.div`height: 262px; margin-bottom: 9px; border-top: 1px solid #2d3e70; border-bottom: 1px solid #2d3e70; display: flex; overflow: hidden; flex: none;`;
const FItems = styled.div`width: 183px; overflow: hidden;`;
const Sec = styled.div`display: flex; justify-content: space-between; height: 35.2px; padding: 6px 11px 0 0; color: #7fa8d4; font-size: 10px; letter-spacing: 1.3px; font-weight: 600; line-height: 20px;`;
const Plus = styled.span`color: #99a3ad; font-weight: 400; font-size: 12px; letter-spacing: 0; line-height: 16px;`;
const SB = styled.div`width: 17px; background: #f0f0f0; display: flex; flex-direction: column; align-items: center; padding-top: 17px;`;
const Thumb = styled.div`width: 15px; height: 80px; background: #cdcdcd; margin: 8px 0 120px; flex: none;`;
const ChkRow = styled.div<{ $c?: string }>`display: flex; gap: 8px; height: 26px; flex: none; color: ${p => p.$c ?? '#fff'}; line-height: 18px; align-items: flex-start;`;
const Chk = styled.div`width: 13px; height: 13px; background: #fff; border: 1px solid #777; flex: none; display: flex;`;
const Count = styled.span<{ $w: number }>`width: ${p => p.$w}px; height: 12px; margin: 3px 0 0 -3px; border-radius: 6px; background: #2c5f8c; font-weight: 700; font-size: 10px; line-height: 12px; text-align: center;`;
const Preview = styled.div`width: 36px; flex: none; height: 394px; background: #1b2236; border: 1px solid #25305a; border-right: 0; border-radius: 3px 0 0 3px; display: flex; flex-direction: column; align-items: flex-end;`;
const PvBox = styled.div`width: 10px; height: 31px; margin: 10px 0 74px; background: #fff; border-radius: 3px 0 0 3px; flex: none;`;
const PvHi = styled.div`width: 25px; height: 73px; background: #222c4b; border-bottom: 2px solid #2f3f70; padding: 37px 0 0 5px; flex: none; margin-bottom: 18px;`;
const PvImg = styled.div`width: 20px; height: 25px; background: linear-gradient(#222, #444); border: 4px solid #d4dccb; border-right: 0;`;
const PvChk = styled(Chk)`margin: 0 1px 34px 0;`;

/* document */
const Doc = styled.div`width: 799px; display: flex; flex-direction: column; flex: none;`;
const DTabs = styled.div`height: 20px; flex: none; background: #535353; color: #eee; display: flex; align-items: center; padding: 1px 6px 0 8px; gap: 13.5px; border-top: 1px solid #a0a3a8;`;
const DTab = styled.div`width: 82px; height: 18px; align-self: flex-end; background: linear-gradient(#fff, #dfe3e6); color: #000; font-weight: 700; border-radius: 3px 3px 0 0; display: flex; align-items: center; padding: 0 5px; margin-left: -6px; justify-content: space-between;`;
const DFrame = styled.div`flex: 1; background: linear-gradient(90deg, #bbb, #eee 4px); padding: 3px 6px 5px 5px; display: flex; min-height: 0;`;
const DInner = styled.div`flex: 1; border: 2px solid #777; border-right: 0; border-left-width: 3px; border-bottom: 0; display: flex; flex-direction: column; background: #f0f0f0; min-width: 0;`;
const Canvas = styled.svg`display: block; flex: none; background: #fff; border-radius: 2px;`;
const CanvasRow = styled.div`display: flex; height: 717px; flex: none;`;
const VScroll = styled.div`flex: 1; background: linear-gradient(#868686, #868686) 8px 262px / 2px 17px no-repeat, #f0f0f0;`;
const Sheets = styled.div`height: 20px; flex: none; background: linear-gradient(#555, #777 3px, #7b7b7b); display: flex; align-items: center;`;
const NavSq = styled.div`width: 13px; height: 13px; margin-right: 3.5px; background: #ececec; display: flex; align-items: center; justify-content: center;`;
const SheetTab = styled.div<{ $w: number; $a?: boolean }>`
  width: ${p => p.$w}px; height: 18px; align-self: flex-start; margin-left: ${p => (p.$a ? 1 : -8)}px; padding-left: 7px; line-height: 20px; color: #111;
  background: ${p => (p.$a ? 'linear-gradient(#fff, #e4e8f0)' : '#d2d6dc')}; font-weight: ${p => (p.$a ? 700 : 400)};
  clip-path: ${p => (p.$a ? 'polygon(0 0, 100% 0, 78% 100%, 0 100%)' : 'polygon(10% 0, 100% 0, 76% 100%, 0 100%)')};
`;

/* right side */
const Side = styled.div`width: 48px; height: 802px; display: flex; flex-direction: column; background: #535353; border-left: 1px solid #8a909a;`;
const SBar = styled.div<{ $h: number }>`height: ${p => p.$h}px; flex: none; display: flex; flex-direction: column; align-items: center; padding-right: 2px; background: linear-gradient(90deg, #d2d5d9, #c6c9ce 40%, #959ca6);`;
const SGrip = styled.div<{ $b?: number }>`width: 31px; height: 5px; margin: 1px 0 ${p => p.$b ?? 0}px; flex: none; background: repeating-linear-gradient(90deg, #3a3d44 0 2px, #eee 2px 3px, transparent 3px 4px) 0 1px / 100% 2px no-repeat;`;
const SCell = styled.div<{ $h: number; $on?: boolean }>`
  height: ${p => p.$h}px; width: 44px; flex: none; display: flex; align-items: center; justify-content: center;
  ${p => p.$on && css`background: linear-gradient(90deg, #fddcb0, #ffc27c 32%, #ffad4a 36%, #ffb95a 60%, #ffe79a 92%); border: 1px solid #b0aaa0;`}
`;
const SSep = styled.div`width: 28px; height: 2px; flex: none; background: #f0f0f0; border-bottom: 1px solid #777;`;
const SCap = styled.div`height: 21px; width: 47px; margin: auto -2px 0 0; background: linear-gradient(90deg, #4a4f5b, #a4abb6); display: flex; align-items: center; justify-content: flex-end; padding-right: 4px; flex: none;`;
const SideCap = () => (
  <SCap><svg width="13" height="11" viewBox="0 0 13 11"><path d="M1.5 0V11" stroke="#fff" strokeWidth="2" /><path d="M6.5 1V10L12 5.5Z" fill="#555b66" stroke="#fff" /></svg></SCap>
);
const Input = styled.div`width: 60px; height: 17px; margin: 0 0 0 5px; background: #fff; padding: 1px 0 0 3px; flex: none;`;
const Sel = styled.div`width: 7px; height: 15px; line-height: 15px; background: #0078d7; color: #fff;`;

const menu: [string, number][] = [['File', 18], ['Edit', 20], ['Select', 30], ['Snaps', 31], ['Tools', 27], ['Actions', 38], ['Commands', 57], ['Auto Draw', 55], ['Roof Planes', 61], ['Wizards', 41], ['Hydraulics', 53], ['Finish', 31], ['Alerts', 29], ['Listing', 34], ['Parts Database', 76], ['AutoPREP', 51], ['Settings', 42], ['View', 25], ['Window', 44], ['Help', 24]];
const nav: [string, number][][] = [[['New Parts', 64], ['Couplings', 61], ['Fittings', 46]], [['Hanger Parts', 82], ['Hardware', 62]], [['Nozzles', 48], ['Pipe', 27], ['Pipe Outlets', 77]], [['Sprinklers', 63], ['Sway Bracing', 83], ['Trim', 29]], [['Valves', 40], ['FDCs', 31]]];

function Scene() {
  return (
    <Canvas width={768} height={717} viewBox="1081 209 768 717">
      <defs>
        <linearGradient id="r" gradientUnits="userSpaceOnUse" x1="1428" y1="692" x2="1441" y2="695"><stop offset="0" stopColor="#f00" /><stop offset=".65" stopColor="#f00" /><stop offset="1" stopColor="#600" /></linearGradient>
      </defs>
      <path d="M1487 464L1499 466L1383 926H1369Z" fill="url(#r)" />
      <path d="M1486 464v-3l5-2h6l4 3v7l-3 3v-5z" fill="#4a4a4a" /><path d="M1486 464l7 1l8 2" stroke="#111" fill="none" />
      <path d="M1325 573Q1327 583 1336 582Q1348 582 1351 573M1390 679Q1394 669 1405 669Q1416 671 1416 680M1395 695Q1397 705 1407 704Q1418 702 1421 695M1412 717Q1416 707 1428 707Q1437 710 1438 718" fill="none" stroke="#f22" strokeWidth="1" />
      <path d="M1430 713l6 4-4 8-8-1z" fill="#500" />
      <path d="M1341 574L1424 723" stroke="#500" strokeWidth="11.5" /><path d="M1341 574L1423.500 723" stroke="#8c0000" strokeWidth="8" />
      <path d="M1424 707Q1432 705 1435 714" stroke="#f00" strokeWidth="3" fill="none" />
      <path d="M1335 577L1348 578L1345 582L1338 583Z" fill="#333" /><circle cx="1339.600" cy="572" r="7.500" fill="#545454" /><circle cx="1339" cy="570.500" r="1" fill="#fcc" />
      <path d="M1398 687l11-6 6 5v4l-2 6-9 3z" fill="#3c3f3e" /><path d="M1401 694l12-4M1397 682l2 5" stroke="#111" strokeWidth="2" />
      <path d="M1414 687H1627" stroke="#c000c0" strokeWidth="6.500" /><path d="M1414 686.500H1627" stroke="#f0f" strokeWidth="5" />
      <path d="M1625 684h9l5 5 1 4-5 3-4-5h-6z" fill="#3c413e" /><path d="M1636 688q7-3 6 4" stroke="#f4f" fill="none" />
      <g transform="rotate(-18 1681 770)"><ellipse cx="1681" cy="770" rx="22.500" ry="19" fill="none" stroke="#000" strokeWidth="2.200" /><ellipse cx="1681" cy="770" rx="14" ry="12" /></g>
      <path d="M1668 760q0 6 6 5" stroke="#f4f" fill="none" />
      <path d="M1637.500 695L1675 762" stroke="#500050" strokeWidth="6" /><path d="M1637.500 695L1674.500 762" stroke="#8b008b" strokeWidth="4" /><path d="M1672 762l5-1 1 3-6 1z" fill="#333" />
      <path d="M1809.600 715L1822 665.700H1813L1840 632.700L1849 662M1849 665.700H1840.500L1830 707.300" fill="none" stroke="#1a7a1a" />
      <path d="M1809.600 715L1790.400 682H1781.400L1786.400 660.300L1818 682H1808.600L1828.600 715" fill="none" stroke="#22228a" />
      <path d="M1830 707.500H1849M1816 724.500H1849" stroke="#7a1010" />
      <circle cx="1818.600" cy="716" r="8.500" fill="#fff" stroke="#777" /><path d="M1818.600 716V708A8 8 0 0 0 1810.600 716ZM1818.600 716V724A8 8 0 0 0 1826.600 716Z" /><path d="M1810 717Q1812 725 1820 725" stroke="#22228a" fill="none" />
    </Canvas>
  );
}

export default function App() {
  const onT = (t: string, w: number): It => ({ t, w, on: true });
  const onI = (i: string, w = 44, tone = 'on'): It => ({ i, w, tone });
  return (
    <Window>
      <Global />
      <Title>
        <svg width="15" height="17" viewBox="0 0 15 17"><rect width="15" height="17" fill="#3b3f4a" /><path d="M2 14L8 2L11 13M5 9h6" stroke="#5a8fe0" strokeWidth="2.500" fill="none" /><path d="M11 9v5H5" stroke="#ccd" fill="none" /></svg>
        <Fit w={798}>{'AutoSPRINK® 2023 Platinum - C:\\Users\\B.Chambers\\Desktop\\AutomationTesting\\SmokeTesting\\SPRINK Smoke Testing Files\\P2S - 5.cad - [P2S - 5.cad]'}</Fit>
        <Grow />
        <WinBtns>
          <svg width="11" height="11"><path d="M0 6.500H11" stroke="#111" /></svg>
          <svg width="11" height="11"><path d="M.5 2.500H8.500V10.500H.5ZM3 .5H8.500Q10.500 .5 10.500 2.500V8" stroke="#111" fill="none" /></svg>
          <svg width="11" height="11"><path d="M.5 .5L10.500 10.500M10.500 .5L.5 10.500" stroke="#111" fill="none" /></svg>
        </WinBtns>
      </Title>
      <Menu>
        <svg width="16" height="15" viewBox="0 0 16 15" shapeRendering="crispEdges"><path d="M0 0H13L16 3V15H0Z" fill="#fff" stroke="#000" /><path d="M2 1h10v4H2z" fill="#ff0" /><path d="M2 7l3 4h5V14H2z" fill="#0c0" /><path d="M3 7h9l-4 5z" fill="#fff" stroke="#080" /><path d="M10 7l4 3" stroke="#f0f" strokeWidth="2" /></svg>
        <MenuItems>{menu.map(([t, w]) => <Fit key={t} w={w}>{t}</Fit>)}</MenuItems>
        <Grow />
        <svg width="42" height="12" viewBox="0 0 42 10"><path d="M2 9.500h7M17.500 4.500h6v5h-6zM19 2.500h6.500V8" stroke="#99a0aa" strokeWidth="1.500" fill="none" /><path d="M34 2l6 8M40 2l-6 8" stroke="#a8afb8" strokeWidth="2" /></svg>
      </Menu>
      <BarRow>
        <Bar w={549} items={[...ic('new open save gear lock gearIn gearOut'), tx('Load Toolbar State', 96), tx('Save Toolbar State', 94)]} />
        <Bar w={1313} items={[...ic('arm wand1 wand2 wand3 wand4 drip node'), tx('Remote Area Table', 95, true), ...ic('remote pm'), tx('Analysis Reports...', 93), ...ic('hatch'), tx('Keep Hydraulically Most Demanding Area', 210, true), tx('Riser Tag', 46), tx('Update Riser Tags', 92, true), ...ic('num1 num2'), tx('Renumber...', 62, true), ...ic('clean'), tx('Cleanup', 43, true)]} />
      </BarRow>
      <BarRow>
        <Bar w={1842} items={[onT('Auto Draw', 55), ...ic('seldots pipe outlet cap dee disc cross elbow slim sway'), tx('Mechanical Cross', 89), tx('Mechanical Tee', 78), ...ic('mech'), tx('Saddle', 34), tx('Seismic Flex', 60), ...ic('tee union wheel nipple pump pend up side ball'), tx('Hydraulic Wormhole', 105), ...ic('hydrant'), tx('Strainer', 40), ...ic('siam fourway hanger hwin'), tx('Hanger Assembly...', 97), tx('Parts Profile...', 70)]} />
      </BarRow>
      <BarRow>
        <Bar w={571} g={9} items={[tx('Create Detail...', 74, true), ...ic('det1 det2'), tx('Hide Layers', 57, true), tx('Isolate Layers', 68, true), tx('Unisolate Layers', 83, true), tx('Interference Checking...', 121, true)]} />
        <Bar w={461} g={9} items={[tx('Hydraulic Calculations...', 122), ...ic('graph book list printer scroll'), tx('Print', 24), ...ic('frame')]} />
        <Bar w={386} g={9.5} items={[...ic('elev'), tx('Elevate to Pipes', 80, true), tx('Elevate Beams...', 80), ...ic('eq1 eq2 eq3')]} />
        <Bar w={436} g={9.5} items={[...ic('beam one star abc A sel3d selkey'), tx('Sprinkler Legend', 87)]} />
      </BarRow>
      <Middle>
        <Left>
          <Panels>
            <Panel $w={221} $gap={4}>
              <Head><Fit w={30}>Layers</Fit><PinX /></Head>
              <LayFrame>
                <PTool $p={3}><Items items={ic('layNew layDel')} /><Sep /><Items items={ic('layE props')} /><Sep /><Items items={ic('checks')} /></PTool>
                <Cols>
                  <Col $w={101}><Fit w={29}>Name</Fit></Col><Col $w={20}>V.</Col><Col $w={20}>S.</Col><Col $w={20}>A.</Col><Col $w={20}>C.</Col><Col $w={60}><Fit w={30}>Eleme</Fit></Col>
                </Cols>
                <Tree>
                  <TreeLines width="16" height="48" viewBox="0 0 16 48"><path d="M5.500 5V38M5.500 5H13M5.500 38H13" stroke="#888" strokeDasharray="1 1" fill="none" /><rect x="1.500" y="17.500" width="8" height="8" fill="#fff" stroke="#888" /><path d="M3 21.500H8M5.500 19V24" stroke="#000" /></TreeLines>
                  {layers.map(([n, w, c, e]) => (
                    <LRow key={n}><LName><Fit w={w}>{n}</Fit></LName><LC $w={21}><Eye /></LC><LC $w={39}><Mag /></LC><LC $w={24}><Swatch $c={c} /></LC><span>{e}</span></LRow>
                  ))}
                </Tree>
                <Scroll $l={18} $w={153} />
              </LayFrame>
              <LTabs><LTab $a><Fit w={19}>La...</Fit></LTab>{(['De...', 'De...', 'Ne...', 'Te...', 'Tra...', 'Fa...']).map((t, i) => <LTab key={i}><Fit w={[23, 22, 22, 20, 24, 21][i]}>{t}</Fit></LTab>)}</LTabs>
            </Panel>
            <Panel $w={197} $gap={4}>
              <Head><Fit w={28}>Alerts</Fit><PinX /></Head>
              <PTool $p={3}><Items items={ic('refresh xg xA xC propsG')} /></PTool>
              <Cols><Col $w={84}><Fit w={43}>Location</Fit></Col><Col $w={42}><Fit w={29}>Inte...</Fit></Col><Col $w={29}><Fit w={15}>C...</Fit></Col><Col $w={60}><Fit w={32}>Status</Fit></Col></Cols>
              <White /><Scroll $l={17} $w={160} /><Blank />
            </Panel>
            <Panel $w={192} $gap={4}>
              <Head><Fit w={41}>Symbols</Fit><PinX /></Head>
              <Cols><Col $w={100}><Fit w={28}>Name</Fit></Col><Col $w={50}><Fit w={31}>Count</Fit></Col><Col $w={60}><Fit w={36}>Eleme..</Fit></Col></Cols>
              <White>
                <SRow><SymIcon /><LC $w={2} /><LC $w={86}><Fit w={73}>Default Sym...</Fit></LC><LC $w={50}>0</LC>2</SRow>
                <SRow><SymIcon /><LC $w={2} /><LC $w={86}><Fit w={73}>Long-Eared ...</Fit></LC><LC $w={50}>0</LC>6</SRow>
              </White>
              <Scroll $l={17} $w={152} />
              <SymPreview width="192" height="95" viewBox="426 872 192 95"><path d="M435 903.500H500Q501 881.500 522.500 881.500Q544 881.500 545 903.500H610M435 935.500H500Q501 957.500 522.500 957.500Q544 957.500 545 935.500H610" fill="none" stroke="#000" strokeWidth="3" /></SymPreview>
            </Panel>
            <Panel $w={168} $gap={4}>
              <Head><Fit w={29}>Select</Fit><PinX /></Head>
              <PTool $p={2}><Items items={ic('bulb1 bulb2 funG funY')} /></PTool>
              <Cols><Col $w={134}><Fit w={40}>Element</Fit></Col></Cols>
              <White />
            </Panel>
            <Panel $w={276} $gap={3}>
              <Head><Fit w={57}>Parts Picker</Fit><PinX /></Head>
              <Picker>
                <BigRow><BigBtn $w={127} $f={21.5} $p={11}><Fit w={106}>Download</Fit></BigBtn><Bars $m={20} /></BigRow>
                <BigRow><BigBtn $w={100} $f={21.5} $p={11}><Fit w={79}>Profiles</Fit></BigBtn><Bars $m={20} /><BigBtn $w={98} $f={17.5} $p={14} $m={28}><Fit w={70}>Support</Fit></BigBtn></BigRow>
                {nav.map((r, i) => <NavRow key={i}>{r.map(([t, w], j) => <NavA key={t} $on={!i && !j}><Fit w={w}>{t}</Fit></NavA>)}</NavRow>)}
                <Sub><Fit w={163}>Flexible Sprinkler Hoses &amp;</Fit><Fit w={73}>Accessories</Fit></Sub>
                <Black>
                  <FCol>
                    <FHead><Fit w={41}>Filters</Fit><Reset><Fit w={37}>Reset</Fit></Reset></FHead>
                    <Search><Fit w={95}>Search by Text</Fit></Search>
                    <FList>
                      <FItems>
                        {([['CATEGORY', 60], ['UNITS', 35], ['REGION', 44], ['ORIGIN', 42], ['MANUFACTURER', 93]] as [string, number][]).map(([t, w], i) => <Sec key={t}><Fit w={w}>{t}</Fit><Plus>{i === 4 ? '−' : '+'}</Plus></Sec>)}
                        <ChkRow><Chk><svg width="11" height="11"><path d="M1.500 5L4.500 8.500L9.500 1.500" stroke="#000" strokeWidth="2" fill="none" /></svg></Chk><Fit w={14}>All</Fit></ChkRow>
                        <ChkRow><Chk /><Fit w={27}>Anvil</Fit><Count $w={20}>29</Count></ChkRow>
                        <ChkRow><Chk /><Fit w={22}>ASC</Fit><Count $w={14}>3</Count></ChkRow>
                        <ChkRow><Chk /><Fit w={47}>Easyflex</Fit><Count $w={15}>18</Count></ChkRow>
                      </FItems>
                      <SB>
                        <svg width="11" height="8"><path d="M.5 7L5.500 2L10.500 7" stroke="#505050" strokeWidth="2.500" fill="none" /></svg>
                        <Thumb />
                        <svg width="11" height="8"><path d="M.5 1L5.500 6L10.500 1" stroke="#505050" strokeWidth="2.500" fill="none" /></svg>
                      </SB>
                    </FList>
                    <ChkRow $c="#48a9f8"><Chk /><Fit w={86}>Metric Display</Fit></ChkRow>
                    <ChkRow $c="#48a9f8"><Chk /><Fit w={71}>Use Staging</Fit></ChkRow>
                  </FCol>
                  <Preview><PvBox /><PvHi><PvImg /></PvHi><PvChk /><PvChk /><PvChk /><PvChk /></Preview>
                </Black>
              </Picker>
            </Panel>
            <Doc>
              <DTabs>
                {([['Start Page', 53], ['P2S - 1.cad', 56], ['P2S - 2.cad', 56], ['P2S - 3.cad', 55.5], ['P2S - 4.cad', 55.5]] as [string, number][]).map(([t, w]) => <Fit key={t} w={w}>{t}</Fit>)}
                <DTab><Fit w={55}>P2S - 5.cad</Fit><svg width="8" height="9"><path d="M.5 1L7.500 8M7.500 1L.5 8" stroke="#444" strokeWidth="1.300" /></svg></DTab>
                <Grow /><svg width="24" height="10"><path d="M5 1L1 5L5 9ZM19 1L23 5L19 9Z" fill="none" stroke="#3c3c3c" /></svg>
              </DTabs>
              <DFrame><DInner>
                <CanvasRow><Scene /><VScroll /></CanvasRow>
                <Scroll $l={301} $w={17} $h={16} />
                <Sheets>
                  {['M8 1L4 5L8 9ZM1.500 1V9', 'M7 1L3 5L7 9Z', 'M3 1L7 5L3 9Z', 'M2 1L6 5L2 9ZM8.500 1V9'].map(d => <NavSq key={d}><svg width="10" height="10"><path d={d} fill="#333" stroke="#333" strokeWidth=".8" /></svg></NavSq>)}
                  <SheetTab $w={60} $a><Fit w={39}>*Model</Fit></SheetTab><SheetTab $w={60}><Fit w={37}>Sheet 1</Fit></SheetTab>
                </Sheets>
              </DInner></DFrame>
            </Doc>
          </Panels>
          <Status>
            <Fit w={135}>Yaw the camera to the left.</Fit><Grow />
            {([['0 selected', 51, 58], ["Elev1: 0'-0  S: 0", 76, 81], ["Length: 9'-0 (9'-0)", 88, 94.5], ['ø 2 (2.0670)', 58, 64.5], ['ø 2 (2.0670)', 58, 64.5], ['# Off', 26, 32], ['Foot', 24, 30]] as [string, number, number][]).map(([t, w, s], i) => <Seg key={i} $w={s}><Fit w={w}>{t}</Fit></Seg>)}
          </Status>
        </Left>
        <Side>
          <SBar $h={233}>
            <SGrip /><SCell $h={84}><Fit v w={66}>Import DWG</Fit></SCell>
            <SCell $h={34}><Icon n="impdwg" /></SCell><SCell $h={50}><Icon n="pages" /></SCell><SCell $h={32}><Icon n="cubes" /></SCell><SideCap />
          </SBar>
          <SBar $h={343}>
            <SGrip /><SCell $h={44}><Icon n="s1" /></SCell><SCell $h={44}><Icon n="s2" /></SCell><SSep /><SCell $h={46}><Icon n="s3" /></SCell><SCell $h={44}><Icon n="s4" /></SCell><SSep /><SCell $h={44}><Icon n="s5" /></SCell><SCell $h={42}><Icon n="s6" /></SCell><SCell $h={44}><Icon n="s7" /></SCell><SideCap />
          </SBar>
          <SBar $h={226}>
            <SGrip $b={3} /><SCell $h={41} $on><Icon n="solid" /></SCell><SCell $h={42}><Icon n="wire" /></SCell><SCell $h={40}><Fit v w={31}>GLSL</Fit></SCell><SCell $h={64} $on><Fit v w={54}>OpenGL®</Fit></SCell><SideCap />
          </SBar>
        </Side>
      </Middle>
      <BarRow>
        <Bar w={795} g={9.5} items={[...ic('wins'), onT('Layers', 31.5), onT('Parts Picker', 58), onT('Alerts', 29), onT('Select', 30), onT('Symbols', 42.5), ...ic('snap0'), onI('snap1'), onI('snap2'), ...ic('snap3 snap4 snap5 snap6'), onI('snap7'), onI('snap8'), ...ic('snap9'), onI('magnet')]} />
        <BarBox $w={186}><Grip $w={10} /><Items items={ic('ops play')} /><Input><Sel>1</Sel></Input><Cap /></BarBox>
        <Bar
          w={939}
          items={[...ic('tgt'), onI('sphere', 44, 'dim'), ...ic('lockt'), tx('Lock On Target', 77), ...ic('zoomIn zoomOut prevV nextV aU'), onI('aL', 44, 'hot'), ...ic('rL aD aR rR spin1 spin2 h1 h2 h3')]}
          end={<EndArrows><svg width="12" height="7"><path d="M1 0V7L5 3.500ZM7 0V7L11 3.500Z" fill="#eee" /></svg><svg width="12" height="13" viewBox="0 0 12 13"><path d="M0 1.500H11" stroke="#fff" strokeWidth="2" /><path d="M1 6.500H10L5.500 11.500Z" fill="#555b66" stroke="#fff" strokeDasharray="2 1" /></svg></EndArrows>}
        />
      </BarRow>
    </Window>
  );
}
